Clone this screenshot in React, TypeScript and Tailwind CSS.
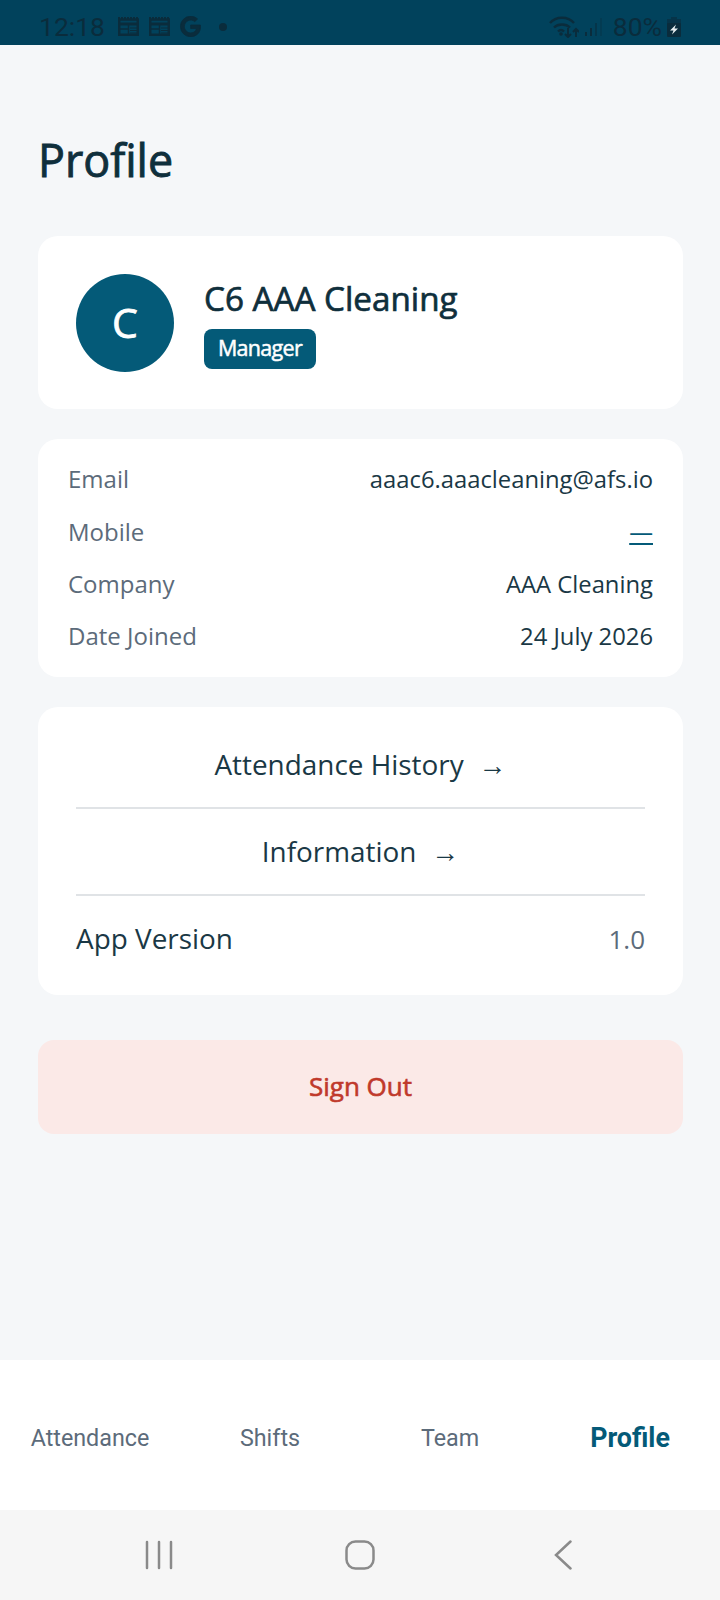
import { FaGoogle } from 'react-icons/fa';

function Row({ label, value, mobile }: { label: string; value?: string; mobile?: boolean }) {
  return (
    <div className="flex h-[52.4px] items-center justify-between leading-[32px]">
      <span className="text-[24px] text-[#5c6b7a]">{label}</span>
      {mobile ? <span className="text-[23.8px] text-[#045a78] underline">—</span> : <span className="text-[23.8px] text-[#1a3845]">{value}</span>}
    </div>
  );
}

function Cal() {
  return (
    <svg width="21" height="19" viewBox="0 0 21 19" fill="none" stroke="#0a2c3c">
      <path d="M0 1h21" strokeWidth="2" strokeDasharray="2 1" />
      <rect x="1.250" y="2.500" width="18.500" height="15.250" strokeWidth="2.500" />
      <path d="M1 7h19" strokeWidth="3" />
      <path d="M10.500 8v10" strokeWidth="1.500" />
      <path d="M2 12h8" strokeWidth="1.500" />
      <path d="M12 11h7M12 13.500h7M12 16h7" strokeWidth="1.200" />
    </svg>
  );
}

function Wifi() {
  return (
    <svg width="30" height="22" viewBox="0 0 30 22" fill="none" stroke="#0a2c3c" strokeWidth="2.400">
      <path d="M1 7C7 0 19 0 25 7M5 11.500C9 7.500 17 7.500 21 11.500M9 15.500c2-2 4-2 6 0" />
      <circle cx="12" cy="18" r="1.800" fill="#0a2c3c" stroke="none" />
      <path d="M19 12v9M16 18l3 3 3-3M27 21v-8M24 16l3-3 3 3" strokeWidth="2" />
    </svg>
  );
}

function Signal() {
  return (
    <svg width="18" height="20" viewBox="0 0 18 20">
      <rect x="0" y="15" width="2" height="4" fill="#0a2c3c" />
      <rect x="5" y="11" width="2" height="8" fill="#0a2c3c" />
      <rect x="10" y="6" width="2" height="13" fill="#0a2c3c" opacity="0.55" />
      <rect x="15" y="1" width="2" height="18" fill="#0a2c3c" opacity="0.3" />
    </svg>
  );
}

function Battery() {
  return (
    <svg width="14" height="20" viewBox="0 0 14 20">
      <path d="M4 0h6v2H4z" fill="#0a2c3c" opacity="0.6" />
      <rect x="0" y="2" width="14" height="5" fill="#0a2c3c" opacity="0.6" />
      <path d="M1 6h12a1 1 0 0 1 1 1v12a1 1 0 0 1-1 1H1a1 1 0 0 1-1-1V7a1 1 0 0 1 1-1z" fill="#0a2c3c" />
      <path d="M9 7.500L3 13.500h3.500l-1.500 4 6-6H7.500z" fill="#e6eef0" />
    </svg>
  );
}

export default function App() {
  return (
    <div className="flex h-[1600px] w-[720px] flex-col bg-[#f5f7f9] font-['Open_Sans',sans-serif]">
      <div className="flex h-[45px] items-center justify-between bg-[#01425c] pl-[39px] pr-[39px] pt-[8px] font-['Roboto',sans-serif] text-[26.5px] text-[#0a2c3c]">
        <div className="flex items-center">
          <span>12:18</span>
          <span className="ml-[13px] flex items-center gap-[10px]">
            <Cal />
            <Cal />
          </span>
          <FaGoogle className="ml-[10px] h-[21px] w-[21px] stroke-[#0a2c3c] stroke-[20px]" />
          <span className="ml-[18px] h-[8px] w-[8px] rounded-full bg-[#0a2c3c]" />
        </div>
        <div className="flex items-center">
          <Wifi />
          <span className="ml-[6px]"><Signal /></span>
          <span className="ml-[10px]">80%</span>
          <span className="ml-[5px]"><Battery /></span>
        </div>
      </div>
      <div className="flex-1 pl-[38px] pr-[37px]">
        <h1 className="mt-[85px] text-[44.8px] leading-[60px] text-[#0f2f3c] [-webkit-text-stroke:0.9px_#0f2f3c]">Profile</h1>
        <div className="mt-[46px] flex h-[173px] items-center gap-[30px] rounded-[20px] bg-white px-[38px]">
          <div className="flex h-[98px] w-[98px] items-center justify-center rounded-full bg-[#045a78] text-[41px] text-white [-webkit-text-stroke:0.8px_#ffffff]">C</div>
          <div>
            <div className="text-[33.2px] leading-[44px] text-[#0f2f3c] [-webkit-text-stroke:0.7px_#0f2f3c]">C6 AAA Cleaning</div>
            <div className="mt-[8px] flex h-[40px] w-[112px] items-center justify-center rounded-[8px] bg-[#045a78] text-[21.5px] tracking-[-0.7px] text-white [-webkit-text-stroke:0.5px_#ffffff]">Manager</div>
          </div>
        </div>
        <div className="mt-[30px] rounded-[20px] bg-white px-[30px] py-[14px]">
          <Row label="Email" value="aaac6.aaacleaning@afs.io" />
          <Row label="Mobile" mobile />
          <Row label="Company" value="AAA Cleaning" />
          <Row label="Date Joined" value="24 July 2026" />
        </div>
        <div className="mt-[30px] rounded-[20px] bg-white px-[38px] text-[27.9px] text-[#1a3845]">
          <div className="flex h-[102px] items-center justify-center gap-[15px] border-b-2 border-[#e0e3e6] pt-[16px]">Attendance History <span>→</span></div>
          <div className="flex h-[87px] items-center justify-center gap-[15px] border-b-2 border-[#e0e3e6] pt-[2px]">Information <span>→</span></div>
          <div className="flex h-[99px] items-center justify-between pb-[12px]">App Version <span className="text-[26px] text-[#5c6b7a]">1.0</span></div>
        </div>
        <div className="mt-[45px] flex h-[94px] items-center justify-center rounded-[16px] bg-[#fbe9e7] text-[26px] text-[#c0392b] [-webkit-text-stroke:0.6px_#c0392b]">Sign Out</div>
      </div>
      <div className="flex h-[150px] items-center bg-white pt-[7px] font-['Roboto',sans-serif] text-[23.3px] text-[#5c6b7a]">
        <div className="flex-1 text-center">Attendance</div>
        <div className="flex-1 text-center">Shifts</div>
        <div className="flex-1 text-center">Team</div>
        <div className="flex-1 text-center text-[26.8px] font-bold text-[#045a78]">Profile</div>
      </div>
      <div className="flex h-[90px] items-center bg-[#f6f6f6] pb-[1px]">
        <svg className="ml-[145px]" width="28" height="30" viewBox="0 0 28 30"><path d="M2 2v26M14 2v26M26 2v26" stroke="#8a8a8a" strokeWidth="2.5" strokeLinecap="round" /></svg>
        <svg className="ml-[172px]" width="30" height="30" viewBox="0 0 30 30"><rect x="1.500" y="1.500" width="27" height="27" rx="9" fill="none" stroke="#8a8a8a" strokeWidth="2.5" /></svg>
        <svg className="ml-[179px]" width="18" height="30" viewBox="0 0 18 30"><path d="M16.500 1.500L2 15l14.500 13.500" fill="none" stroke="#8a8a8a" strokeWidth="2.5" strokeLinecap="round" /></svg>
      </div>
    </div>
  );
}
